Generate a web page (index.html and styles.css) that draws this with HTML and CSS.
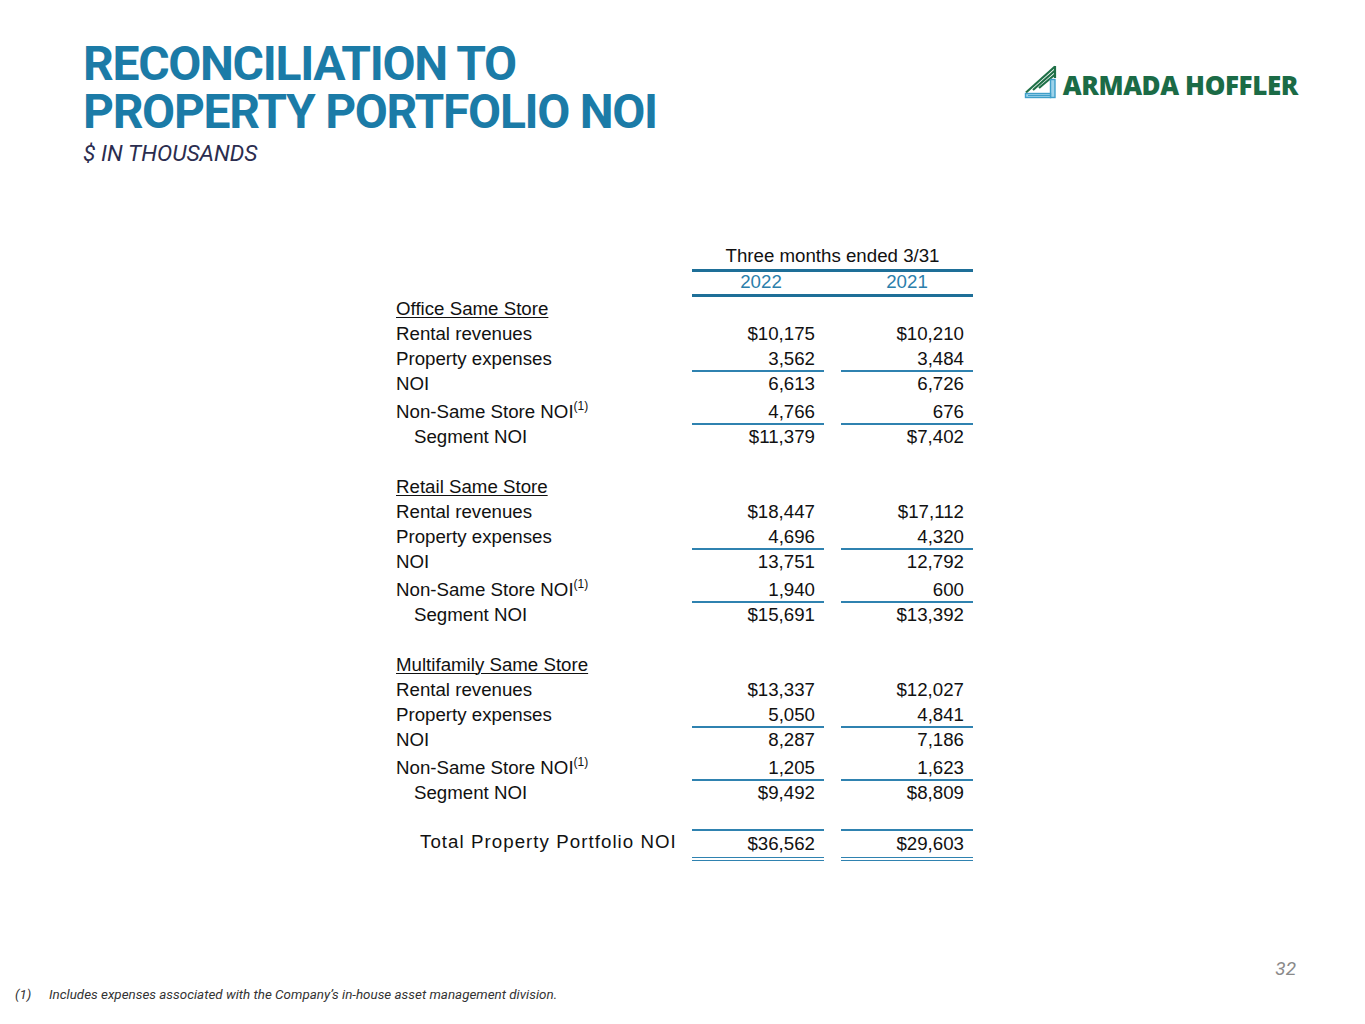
FILE: index.html
```html
<!DOCTYPE html>
<html lang="en">
<head>
<meta charset="utf-8">
<title>Reconciliation to Property Portfolio NOI</title>
<link rel="stylesheet" href="styles.css">
</head>
<body>
<div class="page">
  <header class="top">
    <div class="titles">
      <h1 class="title"><span class="tline">RECONCILIATION TO</span><span class="tline">PROPERTY PORTFOLIO NOI</span></h1>
      <p class="subtitle">$ IN THOUSANDS</p>
    </div>
    <div class="logo">
      <svg class="logo-mark" width="36" height="34" viewBox="0 0 36 34" aria-hidden="true">
        <g stroke="#1f7047" stroke-width="2.2" fill="none" stroke-linecap="butt">
          <line x1="2" y1="27.5" x2="31" y2="1.5"/>
          <line x1="9" y1="25" x2="31" y2="5.5"/>
          <line x1="15" y1="23" x2="31" y2="9.5"/>
          <line x1="31" y1="1" x2="31" y2="13"/>
        </g>
        <g stroke="#3f9fc9" stroke-width="1.4" fill="#9fd3ea">
          <rect x="26.5" y="14.5" width="4.5" height="18"/>
          <rect x="1.5" y="28.5" width="25" height="4"/>
        </g>
        <line x1="4" y1="30.5" x2="26" y2="30.5" stroke="#3f9fc9" stroke-width="1"/>
      </svg>
      <span class="logo-text">ARMADA HOFFLER</span>
    </div>
  </header>

  <main class="report">
    <div class="row head1"><div class="lbl"></div><div class="span-head">Three months ended 3/31</div></div>
    <div class="row head2"><div class="lbl"></div><div class="yr yr1">2022</div><div class="gap"></div><div class="yr">2021</div></div>

    <div class="row"><div class="lbl sect">Office Same Store</div><div class="val"></div><div class="gap"></div><div class="val"></div></div>
    <div class="row"><div class="lbl">Rental revenues</div><div class="val">$10,175</div><div class="gap"></div><div class="val">$10,210</div></div>
    <div class="row"><div class="lbl">Property expenses</div><div class="val ul">3,562</div><div class="gap"></div><div class="val ul">3,484</div></div>
    <div class="row"><div class="lbl">NOI</div><div class="val">6,613</div><div class="gap"></div><div class="val">6,726</div></div>
    <div class="row tall"><div class="lbl">Non-Same Store NOI<sup>(1)</sup></div><div class="val ul">4,766</div><div class="gap"></div><div class="val ul">676</div></div>
    <div class="row"><div class="lbl indent">Segment NOI</div><div class="val">$11,379</div><div class="gap"></div><div class="val">$7,402</div></div>
    <div class="row blank"></div>

    <div class="row"><div class="lbl sect">Retail Same Store</div><div class="val"></div><div class="gap"></div><div class="val"></div></div>
    <div class="row"><div class="lbl">Rental revenues</div><div class="val">$18,447</div><div class="gap"></div><div class="val">$17,112</div></div>
    <div class="row"><div class="lbl">Property expenses</div><div class="val ul">4,696</div><div class="gap"></div><div class="val ul">4,320</div></div>
    <div class="row"><div class="lbl">NOI</div><div class="val">13,751</div><div class="gap"></div><div class="val">12,792</div></div>
    <div class="row tall"><div class="lbl">Non-Same Store NOI<sup>(1)</sup></div><div class="val ul">1,940</div><div class="gap"></div><div class="val ul">600</div></div>
    <div class="row"><div class="lbl indent">Segment NOI</div><div class="val">$15,691</div><div class="gap"></div><div class="val">$13,392</div></div>
    <div class="row blank"></div>

    <div class="row"><div class="lbl sect">Multifamily Same Store</div><div class="val"></div><div class="gap"></div><div class="val"></div></div>
    <div class="row"><div class="lbl">Rental revenues</div><div class="val">$13,337</div><div class="gap"></div><div class="val">$12,027</div></div>
    <div class="row"><div class="lbl">Property expenses</div><div class="val ul">5,050</div><div class="gap"></div><div class="val ul">4,841</div></div>
    <div class="row"><div class="lbl">NOI</div><div class="val">8,287</div><div class="gap"></div><div class="val">7,186</div></div>
    <div class="row tall"><div class="lbl">Non-Same Store NOI<sup>(1)</sup></div><div class="val ul">1,205</div><div class="gap"></div><div class="val ul">1,623</div></div>
    <div class="row"><div class="lbl indent">Segment NOI</div><div class="val">$9,492</div><div class="gap"></div><div class="val">$8,809</div></div>
    <div class="row spacer"></div>

    <div class="row total"><div class="lbl total-lbl">Total Property Portfolio NOI</div><div class="val tot">$36,562</div><div class="gap"></div><div class="val tot">$29,603</div></div>
  </main>

  <div class="pagenum">32</div>
  <footer class="note">
    <span class="note-num">(1)</span>
    <span class="note-text">Includes expenses associated with the Company’s in-house asset management division.</span>
  </footer>
</div>
</body>
</html>
```

FILE: styles.css
```css
html, body {
  margin: 0;
  padding: 0;
  background: #ffffff;
}

.page {
  width: 1365px;
  height: 1024px;
  box-sizing: border-box;
  display: flex;
  flex-direction: column;
  font-family: "Liberation Sans", Arial, sans-serif;
  color: #111111;
}

/* ---------- header ---------- */
.top {
  display: flex;
  justify-content: space-between;
  align-items: flex-start;
  padding: 39.5px 67px 0 83px;
}

.title {
  margin: 0;
  font-family: Roboto, "Liberation Sans", sans-serif;
  font-weight: 700;
  font-size: 48px;
  color: #1b7ba7;
  letter-spacing: -1.3px;
}

.tline {
  display: block;
  height: 48px;
  line-height: 48px;
  overflow: visible;
}

.subtitle {
  margin: 5px 0 0 0;
  font-family: Roboto, "Liberation Sans", sans-serif;
  font-style: italic;
  font-weight: 400;
  font-size: 22.8px;
  line-height: 26px;
  color: #2b2d4f;
}

.logo {
  display: flex;
  align-items: flex-end;
  gap: 3px;
  margin-top: 25px;
}

.logo-mark {
  display: block;
}

.logo-text {
  font-family: "Open Sans", Roboto, sans-serif;
  font-weight: 800;
  font-size: 26px;
  line-height: 26px;
  letter-spacing: -0.4px;
  color: #1b6b46;
  margin-bottom: 1px;
}

/* ---------- report table ---------- */
.report {
  margin: 75.5px 0 0 396px;
  font-size: 18.7px;
  width: 577px;
}

.row {
  display: grid;
  grid-template-columns: 296px 132px 17px 132px;
  height: 25px;
  line-height: 23px;
}

.row > div {
  box-sizing: border-box;
  height: 100%;
  white-space: nowrap;
}

.row.tall {
  height: 28px;
}

.row.tall > div {
  padding-top: 3px;
}

.row.blank {
  height: 25px;
}

.row.spacer {
  height: 23.5px;
}

.lbl.sect {
  text-decoration: underline;
  text-underline-offset: 2px;
  text-decoration-thickness: 1px;
}

.lbl.indent {
  padding-left: 18px;
}

.lbl sup {
  font-size: 12px;
  line-height: 0;
  vertical-align: 8px;
}

.val {
  text-align: right;
  padding-right: 9px;
}

.val.ul {
  border-bottom: 2px solid #2f82b0;
}

/* header rows */
.head1 {
  grid-template-columns: 296px 281px;
  height: 28px;
  line-height: 27px;
}

.span-head {
  text-align: center;
  border-bottom: 3px solid #1e6f98;
}

.head2 {
  height: 26.5px;
  line-height: 24px;
}

.yr {
  text-align: center;
  color: #2a7eab;
}

.head2 > .yr,
.head2 > .gap {
  border-bottom: 3px solid #1e6f98;
}

.yr.yr1 {
  padding-left: 6px;
}

/* total row */
.row.total {
  height: 31px;
  line-height: 26px;
}

.total-lbl {
  padding-left: 24px;
  letter-spacing: 1.05px;
}

.val.tot {
  border-top: 2px solid #2f82b0;
  border-bottom: 4.5px double #2f82b0;
}

/* ---------- footer ---------- */
.pagenum {
  margin: 98px 69px 0 0;
  text-align: right;
  font-family: Roboto, "Liberation Sans", sans-serif;
  font-style: italic;
  font-size: 19px;
  line-height: 22px;
  color: #8a8a8a;
}

.note {
  margin-top: 7px;
  display: flex;
  font-family: Roboto, "Liberation Sans", sans-serif;
  font-style: italic;
  font-size: 13.4px;
  line-height: 16px;
  color: #333333;
  padding-left: 15px;
}

.note-num {
  width: 34px;
}
```
